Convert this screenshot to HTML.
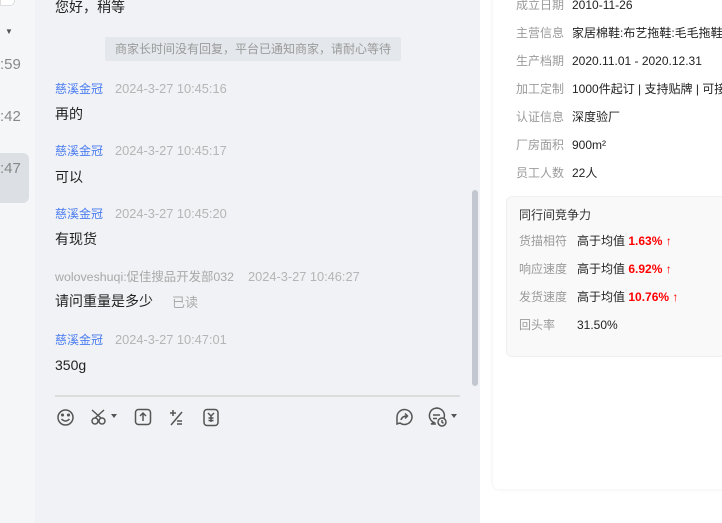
<!DOCTYPE html>
<html><head><meta charset="utf-8"><style>
*{margin:0;padding:0;box-sizing:border-box}
body{width:722px;height:523px;overflow:hidden;position:relative;background:#fff;font-family:"Liberation Sans","Noto Sans CJK SC",sans-serif;}
.a{position:absolute;white-space:nowrap;line-height:16px}
.side{position:absolute;left:0;top:0;width:35px;height:523px;background:#f5f6f8}
.chat{position:absolute;left:35px;top:0;width:445px;height:523px;background:#f0f2f5}
.nm{color:#4a7cf0;font-size:12px}
.tm{color:#b5b5b5;font-size:12.8px;font-family:"Liberation Sans",sans-serif}
.msg{font-size:14px;color:#222}
.lb{color:#9a9a9a;font-size:12px}
.v{color:#222;font-size:12px}
.r{color:#f00;font-weight:bold}
svg{position:absolute}
</style></head><body>
<div class="side"></div>
<div class="a" style="left:0;top:-8px;width:15px;height:14px;border:1px solid #ddd;border-top:none;border-radius:0 0 5px 0;background:#fff"></div>
<div class="a" style="left:5px;top:24px;font-size:8px;color:#555">▼</div>
<div class="a" style="left:0;top:57px;font-size:15px;color:#888">:59</div>
<div class="a" style="left:0;top:109px;font-size:15px;color:#888">:42</div>
<div class="a" style="left:0;top:153px;width:29px;height:50px;background:#dcdfe4;border-radius:0 6px 6px 0"></div>
<div class="a" style="left:0;top:161px;font-size:15px;color:#888">:47</div>
<div class="chat"></div>
<div class="a msg" style="left:55px;top:-1px">您好，稍等</div>
<div class="a" style="left:105px;top:37px;width:296px;height:24px;background:#e4e7eb;border-radius:2px;color:#9a9a9a;font-size:12px;text-align:center;line-height:24px">商家长时间没有回复，平台已通知商家，请耐心等待</div>
<div class="a nm" style="left:55px;top:81px">慈溪金冠</div><div class="a tm" style="left:115px;top:81px">2024-3-27 10:45:16</div>
<div class="a msg" style="left:55px;top:106px">再的</div>
<div class="a nm" style="left:55px;top:143px">慈溪金冠</div><div class="a tm" style="left:115px;top:143px">2024-3-27 10:45:17</div>
<div class="a msg" style="left:55px;top:169px">可以</div>
<div class="a nm" style="left:55px;top:206px">慈溪金冠</div><div class="a tm" style="left:115px;top:206px">2024-3-27 10:45:20</div>
<div class="a msg" style="left:55px;top:231px">有现货</div>
<div class="a tm" style="left:55px;top:269px;color:#a8a8a8;font-size:12.4px">woloveshuqi:促佳搜品开发部032</div><div class="a tm" style="left:248px;top:269px">2024-3-27 10:46:27</div>
<div class="a msg" style="left:55px;top:293px">请问重量是多少</div>
<div class="a" style="left:172px;top:295px;font-size:13px;color:#aaa">已读</div>
<div class="a nm" style="left:55px;top:332px">慈溪金冠</div><div class="a tm" style="left:115px;top:332px">2024-3-27 10:47:01</div>
<div class="a msg" style="left:55px;top:357px">350g</div>
<div class="a" style="left:472px;top:190px;width:6px;height:196px;background:#c3c7cf;border-radius:3px"></div>
<div class="a" style="left:55px;top:395px;width:405px;height:2px;background:#dcdcdc"></div>
<svg width="722" height="523" style="left:0;top:0" fill="none" stroke="#555" stroke-width="1.5">
<circle cx="65.5" cy="417.5" r="7.5"/><circle cx="62.5" cy="415" r=".8" fill="#555"/><circle cx="68.5" cy="415" r=".8" fill="#555"/><path d="M61.5 419q4 4 8 0"/>
<circle cx="95" cy="421" r="3"/><circle cx="102" cy="421" r="3"/><path d="M92 410l9 8M104 410l-9 8"/>
<path d="M111 414h6l-3 4z" fill="#555" stroke="none"/>
<rect x="135.5" y="409.5" width="15" height="15" rx="3"/><path d="M143 421v-7M140 416l3-3 3 3"/>
<path d="M170 413h6M173 410v6M171 425l11-13M177 421h5M177 424h5"/>
<rect x="204" y="409.5" width="14" height="16" rx="3"/><path d="M208 413l3 3 3-3M211 416v6M208.5 418h5M208.5 420.5h5"/>
<path d="M397 417a7.5 7.5 0 1 1 3 6l-3 1z"/><path d="M401 420q1-4 6-4M405 413.5l2.5 2.5-2.5 2.5"/>
<path d="M444 418a7.5 7.5 0 1 0 -10 4.5l-3 1.5h5"/><path d="M433 415h7M433 418.5h4"/><circle cx="442" cy="422" r="4" fill="#f0f2f5"/><path d="M442 420v2.2l1.5 1"/>
<path d="M451 414h6l-3 4z" fill="#555" stroke="none"/>
</svg>
<div class="a" style="left:493px;top:-10px;width:240px;height:499px;background:#fff;border-radius:6px;box-shadow:0 0 4px rgba(0,0,0,.08)"></div>
<div class="a lb" style="left:516px;top:-3px">成立日期</div><div class="a v" style="left:572px;top:-3px">2010-11-26</div>
<div class="a lb" style="left:516px;top:25px">主营信息</div><div class="a v" style="left:572px;top:25px">家居棉鞋:布艺拖鞋:毛毛拖鞋</div>
<div class="a lb" style="left:516px;top:53px">生产档期</div><div class="a v" style="left:572px;top:53px">2020.11.01 - 2020.12.31</div>
<div class="a lb" style="left:516px;top:81px">加工定制</div><div class="a v" style="left:572px;top:81px">1000件起订 | 支持贴牌 | 可接</div>
<div class="a lb" style="left:516px;top:109px">认证信息</div><div class="a v" style="left:572px;top:109px">深度验厂</div>
<div class="a lb" style="left:516px;top:137px">厂房面积</div><div class="a v" style="left:572px;top:137px">900m²</div>
<div class="a lb" style="left:516px;top:165px">员工人数</div><div class="a v" style="left:572px;top:165px">22人</div>
<div class="a" style="left:506px;top:196px;width:230px;height:161px;background:#f9f9f9;border:1px solid #f0f0f0;border-radius:6px"></div>
<div class="a v" style="left:519px;top:207px;color:#333">同行间竞争力</div>
<div class="a lb" style="left:519px;top:233px">货描相符</div><div class="a v" style="left:577px;top:233px">高于均值 <span class="r">1.63%</span> <span style="color:#f00;font-weight:bold">↑</span></div>
<div class="a lb" style="left:519px;top:261px">响应速度</div><div class="a v" style="left:577px;top:261px">高于均值 <span class="r">6.92%</span> <span style="color:#f00;font-weight:bold">↑</span></div>
<div class="a lb" style="left:519px;top:289px">发货速度</div><div class="a v" style="left:577px;top:289px">高于均值 <span class="r">10.76%</span> <span style="color:#f00;font-weight:bold">↑</span></div>
<div class="a lb" style="left:519px;top:317px">回头率</div><div class="a v" style="left:577px;top:317px">31.50%</div>
</body></html>
